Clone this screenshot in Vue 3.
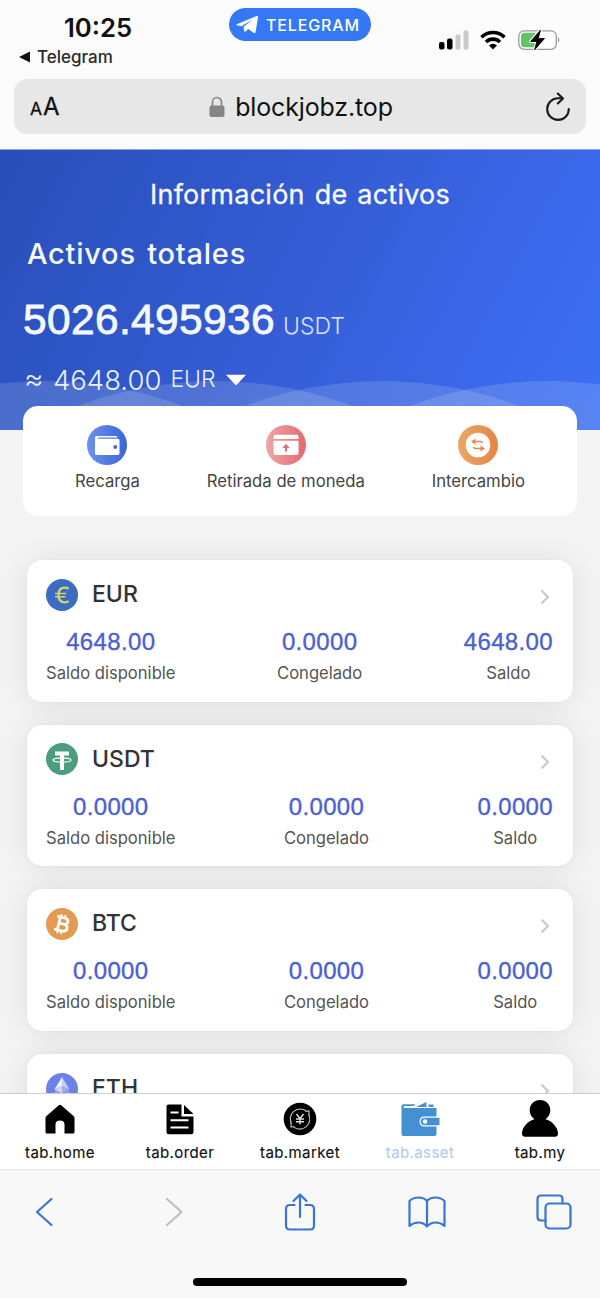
<script setup>
const assets = [
  { code: 'EUR', available: '4648.00', frozen: '0.0000', total: '4648.00' },
  { code: 'USDT', available: '0.0000', frozen: '0.0000', total: '0.0000' },
  { code: 'BTC', available: '0.0000', frozen: '0.0000', total: '0.0000' },
  { code: 'ETH' },
]
const tabs = ['home', 'order', 'market', 'asset', 'my']
</script>

<template>
  <div class="phone">
    <header class="status">
      <div class="clock">
        <div class="time">10:25</div>
        <div class="back-app">
          <svg width="12" height="12" viewBox="0 0 12 12"><path d="M0 6 11 .5v11z" fill="#111" /></svg>
          <span>Telegram</span>
        </div>
      </div>
      <div class="pill">
        <svg width="24" height="20" viewBox="0 0 24 20">
          <path d="M.8 9.200 20.600 1.100c1-.4 1.700.2 1.500 1.200L19.600 17c-.2 1.200-1.200 1.500-2.100.8l-5.300-3.900-2.700 2.600c-.6.6-1.300.4-1.400-.4l-.6-4.300L17 4.400 5.200 11.200.9 10.200c-.7-.2-.7-.7-.1-1z" fill="#fff" />
        </svg>
        <span>TELEGRAM</span>
      </div>
      <div class="signals">
        <svg width="30" height="20" viewBox="0 0 30 20">
          <rect x="0" y="12" width="5.500" height="7.500" rx="2" fill="#000" />
          <rect x="8" y="8.500" width="5.500" height="11" rx="2" fill="#000" />
          <rect x="16.500" y="4.500" width="5" height="15" rx="1.500" fill="#cbcbcb" />
          <rect x="24.500" y=".5" width="5" height="19" rx="1.500" fill="#cbcbcb" />
        </svg>
        <svg class="wifi" width="26" height="20" viewBox="0 0 26 20" fill="none" stroke="#000" stroke-width="3.600">
          <path d="M1.500 7.200a16.500 16.500 0 0 1 23 0" />
          <path d="M6 12a10 10 0 0 1 14 0" />
          <path d="M9 15.500a5.700 5.700 0 0 1 8 0L13 19.500z" fill="#000" stroke="none" />
        </svg>
        <svg class="battery" width="43" height="24" viewBox="0 0 43 24">
          <rect x=".8" y="2.800" width="37.500" height="18.500" rx="5.500" fill="#fff" stroke="#999" stroke-width="1.300" />
          <path d="M6.500 4.800H18v14.500H6.500a3.500 3.500 0 0 1-3.500-3.500V8.300a3.500 3.500 0 0 1 3.500-3.500z" fill="#61c466" />
          <path d="M40 9q2.600 3 0 6z" fill="#999" />
          <path d="M22.500 2 12.500 13.500h6.300L16.500 22 26.500 10.500h-6.200z" fill="none" stroke="#fff" stroke-width="3" stroke-linejoin="round" />
          <path d="M22.500 2 12.500 13.500h6.300L16.500 22 26.500 10.500h-6.200z" fill="#000" stroke="#000" stroke-width=".8" stroke-linejoin="round" />
        </svg>
      </div>
    </header>

    <div class="address">
      <div class="reader"><small>A</small>A</div>
      <div class="url">
        <svg width="16" height="22" viewBox="0 0 16 22">
          <path d="M3.500 10V6a4.500 4.500 0 0 1 9 0v4" fill="none" stroke="#858585" stroke-width="1.700" />
          <rect x=".5" y="9.500" width="15" height="11.500" rx="2" fill="#858585" />
        </svg>
        <span>blockjobz.top</span>
      </div>
      <svg class="reload" width="26" height="30" viewBox="0 0 26 30" fill="none" stroke="#1a1a1a" stroke-width="2.100" stroke-linecap="round" stroke-linejoin="round">
        <path d="M16.500 6.300H13A10.800 10.800 0 1 0 23.800 17" />
        <path d="M12.800 1.500 18 6.500 12.800 11.500" />
      </svg>
    </div>

    <main class="page">
      <section class="hero">
        <svg class="waves" width="600" height="50" viewBox="0 0 600 50" fill="#dbe6f5" fill-opacity=".17">
          <circle v-for="x in [45, 215, 382, 547]" :key="x" :cx="x" cy="391" r="390" />
        </svg>
        <h1>Información de activos</h1>
        <div class="caption">Activos totales</div>
        <div class="sum"><b>5026.495936</b><span>USDT</span></div>
        <div class="approx">
          <i>≈</i><span class="amount">4648.00</span><span class="cur">EUR</span>
          <svg width="20" height="12" viewBox="0 0 20 12"><path d="M0 .8h20L11 10.500q-1 1-2 0z" fill="#fff" /></svg>
        </div>
      </section>

      <nav class="actions">
        <div class="action">
          <svg width="40" height="40" viewBox="0 0 40 40">
            <defs><linearGradient id="blue"><stop stop-color="#6d92ec" /><stop offset="1" stop-color="#3a63da" /></linearGradient></defs>
            <circle cx="20" cy="20" r="20" fill="url(#blue)" />
            <path d="M9.500 11h19.500q1.500 0 1.500 1.500H11v1.300h20q1.500 0 1.500 1.500v13.200q0 1.500-1.500 1.500H9.500Q8 30 8 28.500v-16Q8 11 9.500 11z" fill="#fff" />
            <circle cx="28.300" cy="22" r="1.900" fill="#3f68dc" />
          </svg>
          <span>Recarga</span>
        </div>
        <div class="action">
          <svg width="40" height="40" viewBox="0 0 40 40">
            <defs><linearGradient id="red"><stop stop-color="#efa4a7" /><stop offset="1" stop-color="#e36a70" /></linearGradient></defs>
            <circle cx="20" cy="20" r="20" fill="url(#red)" />
            <path d="M9.500 9.800h21q2 0 2 2v2.200h-25v-2.200q0-2 2-2zM7.500 15.800h25V28q0 2-2 2h-21q-2 0-2-2z" fill="#fff" />
            <path d="M20 26.500v-5" stroke="#dc7076" stroke-width="2.200" />
            <path d="M16.300 23 20 18.800l3.700 4.200z" fill="#dc7076" />
          </svg>
          <span>Retirada de moneda</span>
        </div>
        <div class="action">
          <svg width="40" height="40" viewBox="0 0 40 40">
            <defs><linearGradient id="orange"><stop stop-color="#eba768" /><stop offset="1" stop-color="#e58544" /></linearGradient></defs>
            <circle cx="20" cy="20" r="20" fill="url(#orange)" />
            <circle cx="20" cy="20" r="12.300" fill="#fff" />
            <path d="M24.500 18q-.5-1.500-2-1.500H16M15.500 22q.5 1.500 2 1.500H24" fill="none" stroke="#e08a50" stroke-width="1.600" />
            <path d="M17.500 13.500v6l-4.500-3zM22.500 20.500v6l4.500-3z" fill="#e08a50" />
          </svg>
          <span>Intercambio</span>
        </div>
      </nav>

      <section class="list">
        <article v-for="a in assets" :key="a.code" class="asset">
          <div class="head">
            <svg width="32" height="32" viewBox="0 0 32 32">
              <g v-if="a.code === 'EUR'">
                <circle cx="16" cy="16" r="16" fill="#3b6cc2" />
                <g fill="none" stroke="#d8d467">
                  <path d="M22.700 9.700q-1.700-1-4-1-6.200 0-6.200 7.300t6.200 7.300q2.300 0 4-1" stroke-width="2.300" />
                  <path d="M9 14.500h11M9 17.700h10.500" stroke-width="1.500" />
                </g>
              </g>
              <g v-else-if="a.code === 'USDT'">
                <circle cx="16" cy="16" r="16" fill="#4a9e7d" />
                <path d="M9 8.500h14v4h-5V27h-4V12.500H9z" fill="#fff" />
                <ellipse cx="16" cy="17" rx="9" ry="2.200" fill="none" stroke="#fff" stroke-width="1.200" />
              </g>
              <g v-else-if="a.code === 'BTC'">
                <circle cx="16" cy="16" r="16" fill="#e59a51" />
                <g transform="rotate(14 16 16)" fill="none" stroke="#fff">
                  <path d="M9.500 9.500h7.500q4.200 0 4.200 3.100T17 15.800h-4.200M17 15.800q5 0 5 3.500t-5 3.500H9.500M12.800 9.500v13.300" stroke-width="2.700" />
                  <path d="M13.500 6.500v3M17.300 6.500v3M13.500 23v3M17.300 23v3" stroke-width="2" />
                </g>
              </g>
              <g v-else>
                <circle cx="16" cy="16" r="16" fill="#6c82ea" />
                <path d="M16 4 8.500 16.500 16 13z" fill="#eef1fd" />
                <path d="M16 4l7.500 12.500L16 13z" fill="#c6cff7" />
                <path d="M8.500 16.500 16 13v8z" fill="#cfd7f9" />
                <path d="M23.500 16.500 16 13v8z" fill="#9dabf0" />
                <path d="M8.500 18 16 22.500 23.500 18 16 28.500z" fill="#d5dcfa" />
              </g>
            </svg>
            <span class="code">{{ a.code }}</span>
            <svg class="more" width="10" height="16" viewBox="0 0 10 16"><path d="M1.500 1.500 8 8l-6.500 6.500" fill="none" stroke="#c6c6c6" stroke-width="1.900" /></svg>
          </div>
          <div v-if="a.total" class="figures">
            <div class="figure"><b>{{ a.available }}</b><span>Saldo disponible</span></div>
            <div class="figure"><b>{{ a.frozen }}</b><span>Congelado</span></div>
            <div class="figure"><b>{{ a.total }}</b><span>Saldo</span></div>
          </div>
        </article>
      </section>
    </main>

    <nav class="tabs">
      <div v-for="t in tabs" :key="t" class="tab" :class="{ active: t === 'asset' }">
        <svg width="40" height="40" viewBox="0 0 40 40">
          <path v-if="t === 'home'" d="M18.800 5.200q1.200-1 2.400 0L33.500 16q1 .9 1 2v14q0 1.500-1.500 1.500h-8.500V24.500q0-4-4.500-4t-4.500 4v9H7q-1.500 0-1.500-1.500V18q0-1.100 1-2z" />
          <g v-else-if="t === 'order'">
            <path d="M8.500 4.500H21.500v12H33.500V32q0 2.300-2.300 2.300H8.800Q6.500 34.300 6.500 32V6.500q0-2 2-2zM24 5l9.500 9H24z" />
            <path d="M10.500 12.500H18.500M10.500 20.300h18M10.500 27.500h18" stroke="#fff" stroke-width="2" />
          </g>
          <g v-else-if="t === 'market'">
            <circle cx="20" cy="19" r="16.300" />
            <g fill="none" stroke="#c4c4c4" stroke-width="1.100">
              <path d="M11.500 23.800a10 10 0 0 1 14.800-12.800M28.500 14.300a10 10 0 0 1-14.800 12.800" />
              <path d="M11 22.500v4.500l3.500-.5M29 15.500V11l-3.500.5" />
              <path d="m16.500 14 3.500 4.500 3.500-4.500M20 18.500v6M16 19h8M16 21.700h8" stroke="#ddd" stroke-width="1.400" />
            </g>
          </g>
          <g v-else-if="t === 'asset'" fill="#4391d3">
            <path d="M1.500 6q0-1.700 2-1.700h12L13.500 6H3.800v2H36.500v26q0 2-2 2h-31q-2 0-2-2z" />
            <path d="M16 7 26.500 2v5zM28.500 4.500h5V7h-5z" />
            <path d="M39.500 16.500h-15q-5 0-5 5t5 5h15z" fill="#fff" />
            <path d="M39.500 17.700H24.500q-3.800 0-3.800 3.800t3.800 3.800h15z" />
            <circle cx="25" cy="21.500" r="2.300" fill="#fff" />
          </g>
          <path v-else d="M20 0c6 0 10.300 4.500 10.300 10.200 0 4-2 7-4.800 9C32 21 38 27 38 33.500q0 3.300-3.300 3.300H5.300Q2 36.800 2 33.500C2 27 8 21 14.500 19.200c-2.800-2-4.800-5-4.800-9C9.700 4.500 14 0 20 0z" />
        </svg>
        <span>tab.{{ t }}</span>
      </div>
    </nav>

    <footer class="browser">
      <div class="tools">
        <svg width="38" height="30" viewBox="0 0 38 30"><path d="M25.500 2 11 15l14.500 13" /></svg>
        <svg class="muted" width="38" height="30" viewBox="0 0 38 30"><path d="M14 2 28.500 15 14 28" /></svg>
        <svg width="38" height="40" viewBox="-2.500 0 38 40"><path d="M11 13H6.500q-4 0-4 4v16.500q0 4 4 4h20q4 0 4-4V17q0-4-4-4H22M16.500 25V2.500M10 9l6.500-6.500L23 9" /></svg>
        <svg width="38" height="32" viewBox="0 0 38 32"><path d="M19 5Q16 1.500 10.500 1.500T1.500 5v25q4-3.500 9-3.500t8.500 4q3.500-4 8.500-4t9 3.500V5q-3.500-3.500-9-3.500T19 5zv25" /></svg>
        <svg width="38" height="36" viewBox="-1 0 38 36"><rect x="9.500" y="9.500" width="25" height="25" rx="4" /><path d="M9.500 26.500H5q-3.500 0-3.500-3.500V5q0-3.500 3.500-3.500h18q3.500 0 3.500 3.500v4.500" /></svg>
      </div>
      <div class="indicator"></div>
    </footer>
  </div>
</template>

<style>
body { background: #f9f9f9; }
</style>

<style scoped>
* { box-sizing: border-box; }
.phone {
  width: 600px; height: 1298px; display: flex; flex-direction: column; overflow: hidden;
  font-family: Inter, "Liberation Sans", sans-serif; white-space: nowrap; background: #fbfbfb; color: #111;
}
svg { display: block; flex: none; }

.status { height: 79px; flex: none; display: grid; grid-template-columns: 229px 142px 229px; align-items: start; }
.clock { padding-top: 13px; }
.time { padding-left: 64px; height: 30px; line-height: 30px; font-size: 25.700px; font-weight: 600; }
.back-app { display: flex; align-items: center; gap: 6px; padding-left: 19px; height: 28px; font-size: 17px; font-weight: 500; color: #2a2a2a; }
.pill {
  margin-top: 8px; height: 33px; border-radius: 17px; background: #3478f6; color: #fff;
  display: flex; align-items: center; gap: 6px; padding-left: 7px; font-size: 16px; font-weight: 500; letter-spacing: .85px;
}
.signals { display: flex; align-items: center; padding: 28px 0 0 68px; }
.wifi { margin-left: 11px; }
.battery { margin-left: 12px; }

.address {
  flex: none; height: 55px; margin: 0 14px 15px; border-radius: 13px; background: #e7e7e7;
  display: grid; grid-template-columns: 100px 1fr 100px; align-items: center;
}
.reader { padding: 2px 0 0 16px; font-size: 24px; line-height: 30px; -webkit-text-stroke: .3px; }
.reader small { font-size: 17.500px; margin-right: 1px; }
.url { display: flex; align-items: center; justify-content: center; gap: 10px; padding-left: 2px; font-size: 25px; letter-spacing: -.15px; }
.reload { justify-self: end; margin-right: 15px; }

.page { flex: 1; min-height: 0; overflow: hidden; background: #f4f4f4; border-top: 1px solid #8da4df; }
.hero {
  position: relative; height: 280px; overflow: hidden; color: #f5f9ff;
  background: linear-gradient(118deg, #284fb8 0%, #345bd2 45%, #3c6aee 85%, #3d70f4 100%);
}
.waves { position: absolute; left: 0; bottom: 0; }
h1 { margin: 0; padding-top: 27px; height: 77px; line-height: 35px; text-align: center; font-size: 27px; font-weight: 400; letter-spacing: .25px; word-spacing: 2px; -webkit-text-stroke: .3px; }
.caption { padding-left: 27px; height: 54px; line-height: 54px; font-size: 29px; font-weight: 500; letter-spacing: .75px; word-spacing: 3px; }
.sum { display: flex; align-items: baseline; height: 76px; line-height: 78px; padding-left: 23px; }
.sum b { font-family: "Liberation Sans", Arial, sans-serif; font-size: 42.500px; font-weight: 400; letter-spacing: .35px; -webkit-text-stroke: .8px; }
.sum span { font-size: 23px; font-weight: 300; margin-left: 8px; color: #d8e5ff; }
.approx { position: relative; display: flex; align-items: center; height: 46px; padding-left: 24px; color: #e9f1ff; font-weight: 300; }
.approx i { font-style: normal; font-size: 30px; width: 29px; margin-top: -4px; }
.amount { font-size: 27.500px; }
.cur { font-size: 23px; margin: -3px 10px 0 9px; }

.actions {
  position: relative; margin: -24px 23px 0; height: 110px; border-radius: 15px; background: #fff;
  display: flex; justify-content: space-between; padding: 19px 52px 0; color: #444;
}
.action { display: flex; flex-direction: column; align-items: center; gap: 4px; font-size: 16.700px; line-height: 24px; }

.list { padding: 44px 27px 0; display: flex; flex-direction: column; gap: 23px; }
.asset { flex: none; height: 141.700px; border-radius: 15px; background: #fff; padding: 18px 20px 0 19px; box-shadow: 0 0 34px rgba(0, 0, 0, .09), 0 0 3px rgba(0, 0, 0, .05); }
.head { display: flex; align-items: center; height: 33px; }
.code { margin: -1px 0 0 14px; font-size: 23px; font-weight: 500; color: #333; }
.more { margin: 5px 3px 0 auto; }
.figures { display: flex; justify-content: space-between; padding-top: 15px; }
.figure { display: flex; flex-direction: column; align-items: center; }
.figure b { height: 33px; line-height: 32px; font-family: "Liberation Sans", Arial, sans-serif; font-size: 24px; font-weight: 400; letter-spacing: .35px; -webkit-text-stroke: .35px; color: #4b5fd3; }
.figure span { height: 28px; line-height: 28px; font-size: 16.600px; color: #555; }

.tabs { position: relative; flex: none; height: 76px; display: grid; grid-template-columns: repeat(5, 1fr); background: #fff; border-top: 1px solid #cfcfcf; }
.tab { display: flex; flex-direction: column; align-items: center; padding-top: 6px; font-size: 15px; line-height: 25px; letter-spacing: .4px; -webkit-text-stroke: .15px; }
.active { color: #b4ccef; }

.browser { flex: none; height: 129px; background: #f8f8f8; border-top: 1px solid #e6e6e6; }
.tools { display: flex; align-items: center; justify-content: space-between; height: 83px; padding: 0 27px 0 26px; }
.tools svg { fill: none; stroke: #3875d7; stroke-width: 2.200; stroke-linecap: round; stroke-linejoin: round; }
.tools .muted { stroke: #bdbdbd; }
.indicator { width: 214px; height: 8px; border-radius: 4px; background: #000; margin: 25px auto 0; }
</style>
